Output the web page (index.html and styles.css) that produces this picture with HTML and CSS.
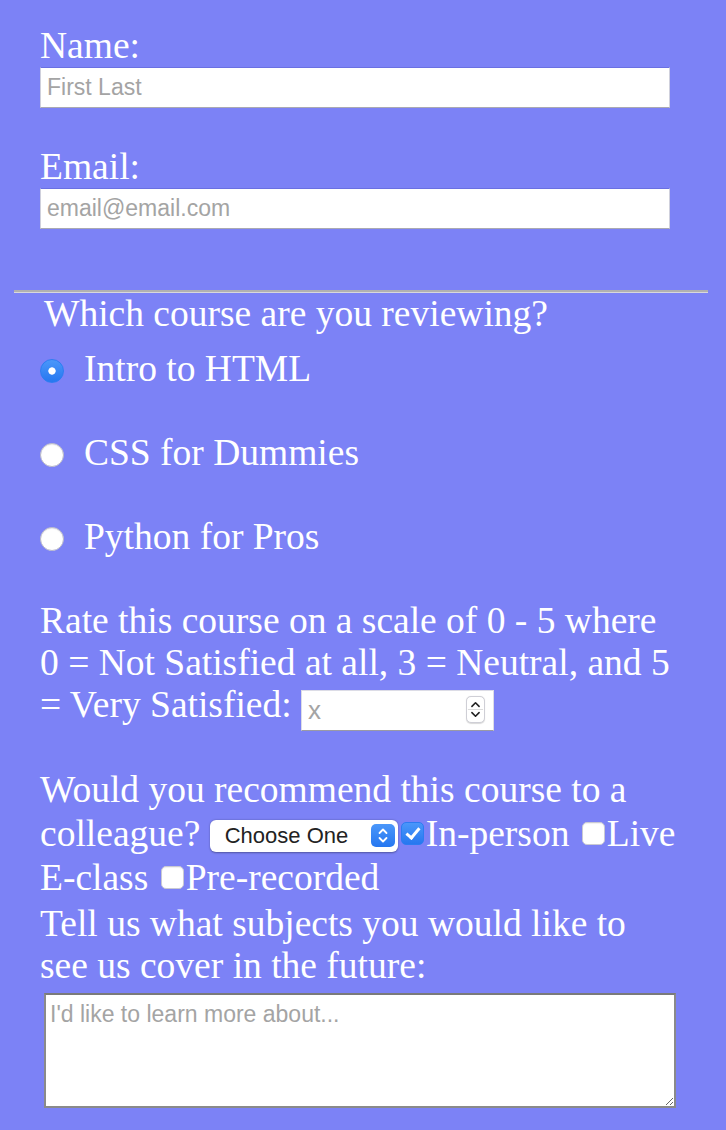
FILE: index.html
```html
<!DOCTYPE html>
<html lang="en">
<head>
<meta charset="utf-8">
<title>Course Survey</title>
<link rel="stylesheet" href="styles.css">
</head>
<body>
<form class="survey">
  <div class="field">
    <label class="label" for="name">Name:</label>
    <input class="text-input" id="name" type="text" placeholder="First Last">
  </div>
  <div class="field field-email">
    <label class="label" for="email">Email:</label>
    <input class="text-input" id="email" type="email" placeholder="email@email.com">
  </div>

  <hr class="divider">

  <div class="question">Which course are you reviewing?</div>
  <div class="options">
    <label class="option"><input class="radio" type="radio" name="course" checked>Intro to HTML</label>
    <label class="option"><input class="radio" type="radio" name="course">CSS for Dummies</label>
    <label class="option"><input class="radio" type="radio" name="course">Python for Pros</label>
  </div>

  <p class="para rate">Rate this course on a scale of 0 - 5 where 0 = Not Satisfied at all, 3 = Neutral, and 5 = Very Satisfied: <span class="num-wrap"><input class="num-input" type="number" min="0" max="5" placeholder="x"><svg class="num-stepper" width="19" height="27" viewBox="0 0 19 27" aria-hidden="true"><path d="M5.5 10 L9.5 6 L13.5 10" fill="none" stroke="#222" stroke-width="1.8" stroke-linecap="round" stroke-linejoin="round"/><line x1="1" y1="13.5" x2="18" y2="13.5" stroke="#d8d8d8" stroke-width="1"/><path d="M5.5 17 L9.5 21 L13.5 17" fill="none" stroke="#222" stroke-width="1.8" stroke-linecap="round" stroke-linejoin="round"/></svg></span></p>

  <p class="para recommend">Would you recommend this course to a colleague? <span class="select-wrap"><select class="select"><option>Choose One</option><option>Yes</option><option>No</option><option>Maybe</option></select><svg class="select-stepper" width="24" height="23" viewBox="0 0 24 23" aria-hidden="true"><path d="M8.5 9 L12 5.5 L15.5 9" fill="none" stroke="#fff" stroke-width="1.8" stroke-linecap="round" stroke-linejoin="round"/><path d="M8.5 14 L12 17.5 L15.5 14" fill="none" stroke="#fff" stroke-width="1.8" stroke-linecap="round" stroke-linejoin="round"/></svg></span><input class="check" type="checkbox" checked>In-person <input class="check" type="checkbox">Live E-class <input class="check" type="checkbox">Pre-recorded</p>

  <label class="para subjects" for="subjects">Tell us what subjects you would like to see us cover in the future:</label>
  <textarea class="textarea" id="subjects" placeholder="I'd like to learn more about..."></textarea>
</form>
</body>
</html>
```

FILE: styles.css
```css
body {
  margin: 0;
  background: #7c82f6;
  color: #fff;
  font-family: "Liberation Serif", "Times New Roman", serif;
  font-size: 37.5px;
  line-height: 42px;
}

.survey {
  padding: 25px 45px 40px 40px;
}

.label {
  display: block;
}

.text-input {
  display: block;
  box-sizing: border-box;
  width: 630px;
  height: 41px;
  margin: 0;
  padding: 0 6px;
  border: 1px solid;
  border-color: #6a70e2 #cfd0dc #a9a9b3 #cfd0dc;
  background: #fff;
  font: 23px "Liberation Sans", Arial, sans-serif;
  color: #333;
  outline: none;
}

.text-input::placeholder,
.num-input::placeholder,
.textarea::placeholder {
  color: #a4a4a4;
}

.field-email {
  margin-top: 38px;
}

.divider {
  margin: 61px -27px 0 -26px;
  height: 0;
  border: 0;
  border-top: 2px solid #b1b1b1;
  border-bottom: 1px solid #d8d8dc;
}

.question {
  padding-left: 4px;
}

.options {
  margin-top: 13px;
  display: flex;
  flex-direction: column;
  gap: 42px;
}

.option {
  display: flex;
  align-items: center;
}

.radio {
  appearance: none;
  -webkit-appearance: none;
  flex: none;
  width: 24px;
  height: 24px;
  margin: 4px 20px 0 0;
  border-radius: 50%;
  border: 1px solid #b9b9c9;
  background: #fff;
  box-shadow: inset 0 1px 1px rgba(0, 0, 0, 0.08);
}

.radio:checked {
  border-color: #2d7df2;
  background: radial-gradient(circle, #fff 0 3.3px, transparent 4px),
    linear-gradient(#4a97fa, #2677f0);
  box-shadow: none;
}

.para {
  margin: 0;
}

.rate {
  margin-top: 42px;
}

.num-wrap {
  position: relative;
  display: inline-flex;
  vertical-align: -2px;
  line-height: normal;
}

.num-input {
  -moz-appearance: textfield;
  appearance: textfield;
  box-sizing: border-box;
  width: 193px;
  height: 41px;
  margin: 0;
  padding: 0 6px;
  border: 1px solid;
  border-color: #dcdce6 #dcdce6 #9a9aa4 #dcdce6;
  background: #fff;
  font: 26px "Liberation Sans", Arial, sans-serif;
  color: #333;
  outline: none;
}

.num-input::-webkit-outer-spin-button,
.num-input::-webkit-inner-spin-button {
  -webkit-appearance: none;
  margin: 0;
}

.num-stepper {
  position: absolute;
  right: 9px;
  top: 6px;
  box-sizing: border-box;
  border: 1px solid #cfcfd6;
  border-radius: 5px;
  background: #fff;
  box-shadow: 0 0.5px 1px rgba(0, 0, 0, 0.15);
  pointer-events: none;
}

.recommend {
  margin-top: 37px;
  line-height: 44px;
}

.select-wrap {
  position: relative;
  display: inline-flex;
  vertical-align: 3px;
  line-height: normal;
}

.select {
  appearance: none;
  -webkit-appearance: none;
  box-sizing: border-box;
  width: 188px;
  height: 32px;
  margin: 0;
  padding: 0 0 0 15px;
  border: 0;
  border-radius: 6px;
  background: #fff;
  box-shadow: 0 0.5px 2px rgba(0, 0, 0, 0.35);
  font: 22px "Liberation Sans", Arial, sans-serif;
  color: #222;
  outline: none;
}

.select-stepper {
  position: absolute;
  right: 3px;
  top: 4px;
  border-radius: 5px;
  background: linear-gradient(#4a97fa, #2677f0);
  pointer-events: none;
}

.check {
  appearance: none;
  -webkit-appearance: none;
  position: relative;
  box-sizing: border-box;
  width: 23px;
  height: 23px;
  margin: 0 2px 1px 3px;
  vertical-align: baseline;
  border-radius: 5px;
  border: 1px solid #c9c9d3;
  background: #fff;
  box-shadow: inset 0 1px 1px rgba(0, 0, 0, 0.06);
}

.check:checked {
  border-color: #2c7cf2;
  background: linear-gradient(#4a97fa, #2677f0);
  box-shadow: none;
}

.check:checked::after {
  content: "";
  position: absolute;
  left: 7px;
  top: 2px;
  width: 5px;
  height: 11px;
  border: solid #fff;
  border-width: 0 3px 3px 0;
  transform: rotate(40deg);
}

.subjects {
  display: block;
  margin-top: 3px;
}

.textarea {
  display: block;
  box-sizing: border-box;
  width: 632px;
  height: 115px;
  margin: 6px 0 0 4px;
  padding: 6px 4px;
  border: 2px solid #7f7f7f;
  border-color: #7a7a7a #8a8a8a #8a8a8a #8a8a8a;
  background: #fff;
  font: 23px "Liberation Sans", Arial, sans-serif;
  color: #333;
  outline: none;
}
```
